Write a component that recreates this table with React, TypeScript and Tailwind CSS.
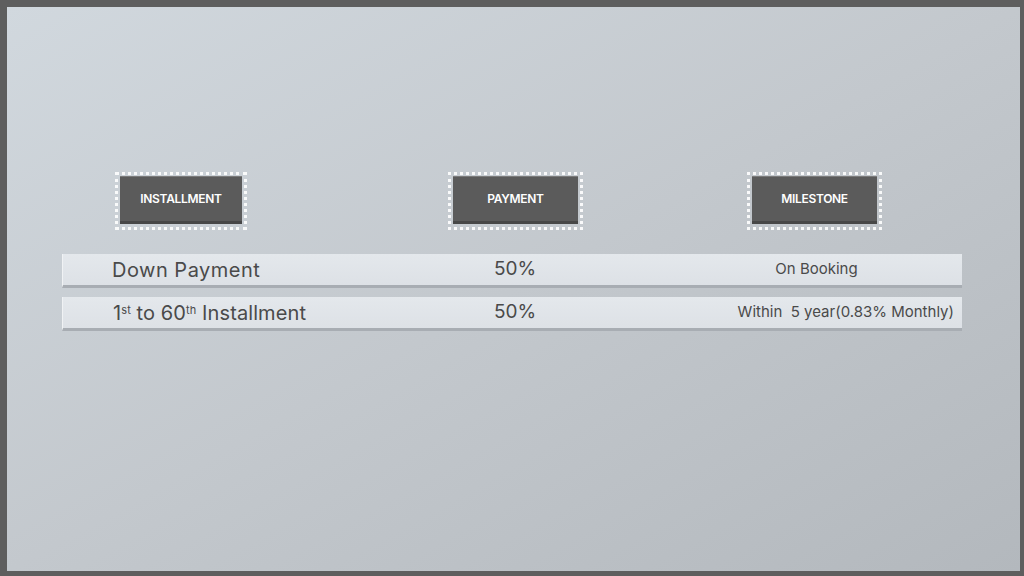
const headers = [
  { label: "INSTALLMENT", width: "w-[132px]" },
  { label: "PAYMENT", width: "w-[135px]" },
  { label: "MILESTONE", width: "w-[135px]" },
];

function HeaderBox({ label, width }: { label: string; width: string }) {
  return (
    <div className={`${width} h-[58px] border-[3px] border-dotted border-white/90 px-[2px] pt-[1px] pb-[3px]`}>
      <div className="h-full w-full bg-[#5b5b5b] border-b-[3px] border-[#474747] shadow-[inset_0_1px_0_#7a7a7a] flex items-center justify-center">
        <span className="text-[12px] font-semibold text-white tracking-tight">{label}</span>
      </div>
    </div>
  );
}

function Row({ children }: { children: React.ReactNode }) {
  return (
    <div className="h-[34px] bg-gradient-to-b from-[#e4e8ec] to-[#dde1e6] border-b-[3px] border-[#a8adb3] border-l border-l-[#f0f2f4] flex items-center text-[#4a4a4a]">
      {children}
    </div>
  );
}

export default function App() {
  return (
    <div
      className="w-[1024px] h-[576px] border-t-[7px] border-l-[7px] border-r-[4px] border-b-[5px] border-[#5e5e5e] bg-gradient-to-br from-[#d1d8de] via-[#c3c8cd] to-[#b3b8bd] overflow-hidden"
      style={{ fontFamily: "Inter, 'Open Sans', sans-serif" }}
    >
      <div className="pt-[165px] pl-[55px]">
        <div className="flex items-start pl-[53px]">
          <HeaderBox label={headers[0].label} width={headers[0].width} />
          <div className="w-[201px]" />
          <HeaderBox label={headers[1].label} width={headers[1].width} />
          <div className="w-[164px]" />
          <HeaderBox label={headers[2].label} width={headers[2].width} />
        </div>
        <div className="mt-[24px] w-[900px] flex flex-col gap-[9px]">
          <Row>
            <div className="w-[380px] pl-[49px] text-[20px] tracking-[0.5px] whitespace-nowrap">Down Payment</div>
            <div className="w-[144px] text-center text-[19px]">50%</div>
            <div className="flex-1 text-center text-[15px] pl-[84px] whitespace-nowrap">On Booking</div>
          </Row>
          <Row>
            <div className="w-[380px] pl-[50px] text-[20px] tracking-[0.1px] whitespace-nowrap">
              1<sup className="text-[11px]">st</sup> to 60<sup className="text-[11px]">th</sup> Installment
            </div>
            <div className="w-[144px] text-center text-[19px]">50%</div>
            <div className="flex-1 text-right text-[15px] pr-[8px] whitespace-nowrap">
              Within&nbsp; 5 year(0.83% Monthly)
            </div>
          </Row>
        </div>
      </div>
    </div>
  );
}
